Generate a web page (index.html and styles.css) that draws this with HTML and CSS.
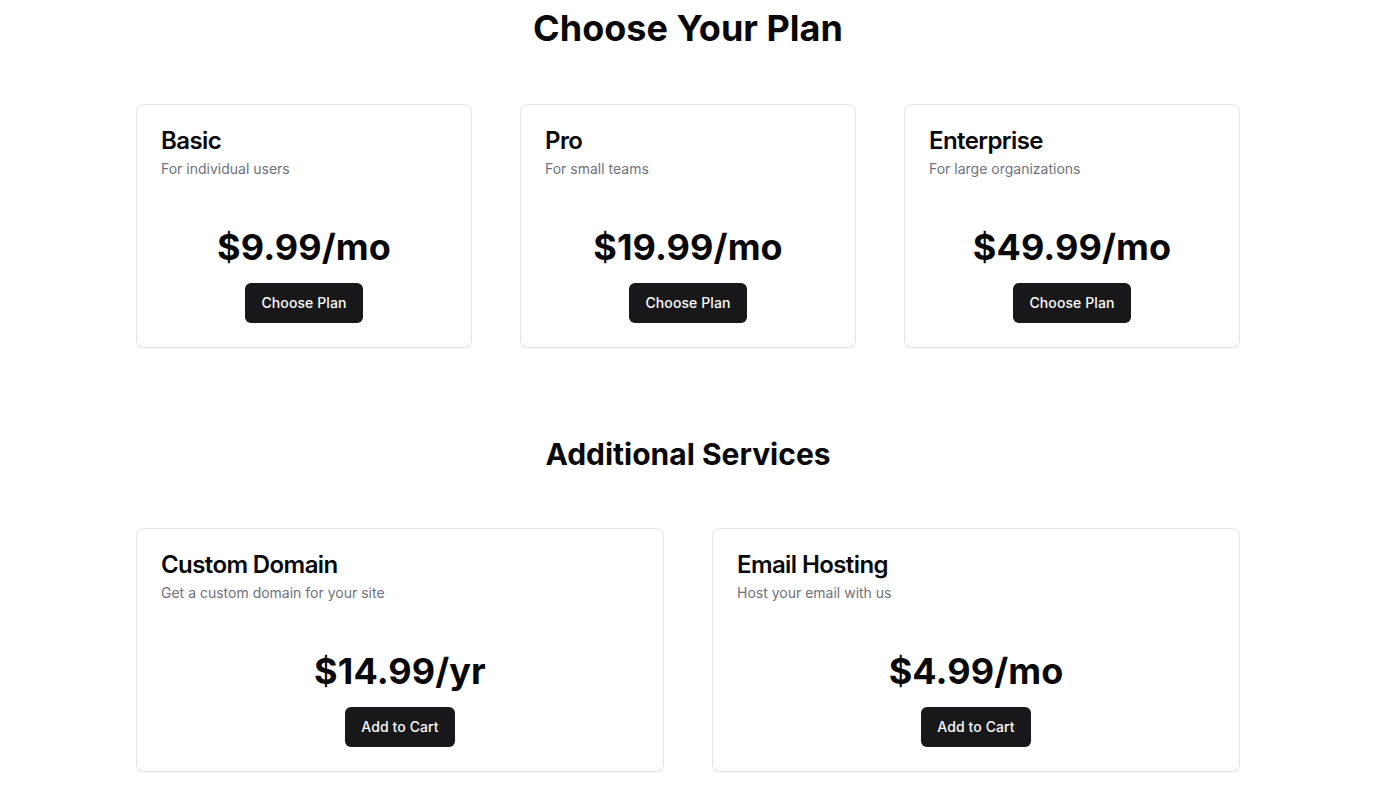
FILE: index.html
```html
<!DOCTYPE html>
<html lang="en">
<head>
<meta charset="utf-8">
<title>Choose Your Plan</title>
<link rel="stylesheet" href="styles.css">
</head>
<body>
<main class="page">
  <h1 class="page-title">Choose Your Plan</h1>
  <section class="grid grid-3">
    <div class="card">
      <div class="card-header">
        <h3 class="card-title">Basic</h3>
        <p class="card-desc">For individual users</p>
      </div>
      <div class="card-content">
        <div class="price">$9.99/mo</div>
        <button class="btn">Choose Plan</button>
      </div>
    </div>
    <div class="card">
      <div class="card-header">
        <h3 class="card-title">Pro</h3>
        <p class="card-desc">For small teams</p>
      </div>
      <div class="card-content">
        <div class="price">$19.99/mo</div>
        <button class="btn">Choose Plan</button>
      </div>
    </div>
    <div class="card">
      <div class="card-header">
        <h3 class="card-title">Enterprise</h3>
        <p class="card-desc">For large organizations</p>
      </div>
      <div class="card-content">
        <div class="price">$49.99/mo</div>
        <button class="btn">Choose Plan</button>
      </div>
    </div>
  </section>

  <h2 class="section-title">Additional Services</h2>
  <section class="grid grid-2">
    <div class="card">
      <div class="card-header">
        <h3 class="card-title">Custom Domain</h3>
        <p class="card-desc">Get a custom domain for your site</p>
      </div>
      <div class="card-content">
        <div class="price">$14.99/yr</div>
        <button class="btn">Add to Cart</button>
      </div>
    </div>
    <div class="card">
      <div class="card-header">
        <h3 class="card-title">Email Hosting</h3>
        <p class="card-desc">Host your email with us</p>
      </div>
      <div class="card-content">
        <div class="price">$4.99/mo</div>
        <button class="btn">Add to Cart</button>
      </div>
    </div>
  </section>
</main>
</body>
</html>
```
FILE: styles.css
```css
* { box-sizing: border-box; }
html, body { margin: 0; padding: 0; background: #ffffff; }
body {
  font-family: Inter, "Noto Sans", "Liberation Sans", sans-serif;
  color: #09090b;
}
.page {
  max-width: 1104px;
  margin: 0 auto;
  padding-top: 8px;
  padding-bottom: 32px;
}
.page-title {
  margin: 0 0 56px;
  text-align: center;
  font-size: 36px;
  line-height: 40px;
  font-weight: 700;
}
.section-title {
  margin: 88px 0 56px;
  text-align: center;
  font-size: 30px;
  line-height: 36px;
  font-weight: 700;
}
.grid { display: grid; gap: 48px; }
.grid-3 { grid-template-columns: repeat(3, 1fr); }
.grid-2 { grid-template-columns: repeat(2, 1fr); }
.card {
  border: 1px solid #e4e4e7;
  border-radius: 8px;
  background: #fff;
  box-shadow: 0 1px 2px rgba(0,0,0,0.05);
}
.card-header {
  padding: 24px;
  display: flex;
  flex-direction: column;
  gap: 6px;
}
.card-title {
  margin: 0;
  font-size: 24px;
  line-height: 24px;
  font-weight: 600;
  letter-spacing: -0.6px;
}
.card-desc {
  margin: 0;
  font-size: 14px;
  line-height: 20px;
  color: #71717a;
}
.card-content {
  padding: 24px 24px 24px;
  display: flex;
  flex-direction: column;
  align-items: center;
  gap: 16px;
}
.price {
  font-size: 36px;
  line-height: 40px;
  font-weight: 700;
  letter-spacing: 0.1px;
}
.btn {
  font-family: inherit;
  height: 40px;
  padding: 0 16px 2px;
  border: none;
  border-radius: 6px;
  background: #18181b;
  color: #fafafa;
  font-size: 14px;
  font-weight: 500;
  letter-spacing: 0.1px;
  cursor: pointer;
}
```
